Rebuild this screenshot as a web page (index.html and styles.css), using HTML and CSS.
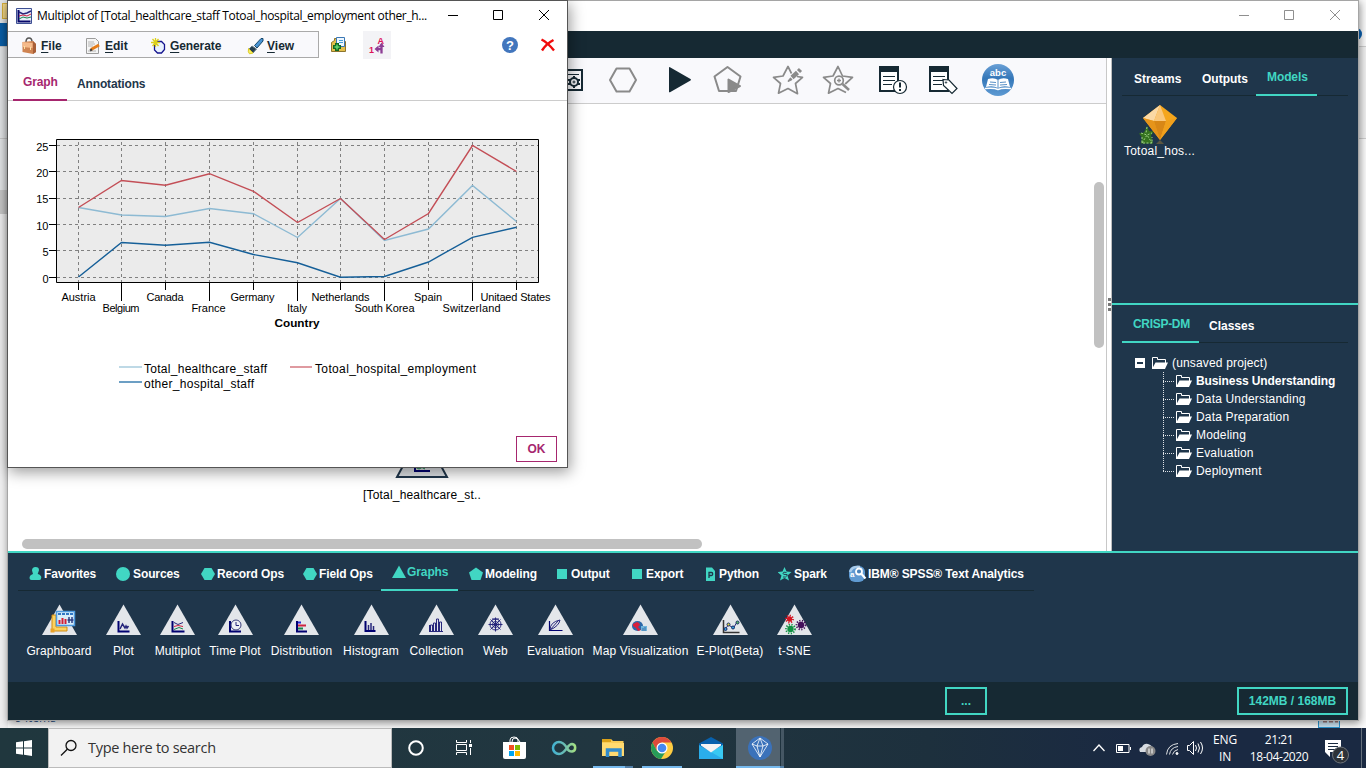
FILE: index.html
```html
<!DOCTYPE html>
<html lang="en">
<head>
<meta charset="utf-8">
<title>Multiplot</title>
<link rel="stylesheet" href="styles.css">
</head>
<body>
<div class="desktop">
  <svg class="backdrop" width="1366" height="728" viewBox="0 0 1366 728">
    <rect width="1366" height="728" fill="#fbfbfb"/>
    <rect width="8" height="728" fill="#f0f0f1"/>
    <rect y="0" width="8" height="190" fill="#e4e6e8"/>
    <rect x="2.500" y="3.500" width="8" height="15" fill="#f8dc8a" stroke="#d9b23f"/>
    <rect y="23" width="8" height="23" fill="#0a5fa8"/>
    <path d="M0 46.500h8M0 138.500h8" stroke="#c8c8c8"/>
    <rect y="190" width="8" height="24" fill="#c9c9c9"/>
    <path d="M1358 46.500h8M1358 138.500h8" stroke="#cfcfcf"/>
    <rect x="1358" y="47" width="8" height="91" fill="#f1f1f1"/>
    <circle cx="1355.500" cy="34" r="6.500" fill="#0a63b5"/>
    <rect x="1318.500" y="710" width="21" height="17.500" fill="#cde6f5" stroke="#2b96d1"/>
    <path d="M1323 721.500h4M1329 721.500h4M1335 721.500h3" stroke="#9b7777" stroke-width="2"/>
    <text x="15" y="721.500" class="items-text">9 items</text>
  </svg>

  <section class="main-window">
    <header class="main-title">
      <svg width="139" height="30" viewBox="1219 1 139 30" fill="none" stroke="#8f8f8f"><path d="M1239 15.500h10M1284.500 10.500h9v9h-9zM1330 10l10 10M1340 10l-10 10"/></svg>
    </header>
    <div class="menu-strip"></div>
    <div class="workspace">
      <div class="stream">
        <div class="toolbar">
          <svg width="36" height="45" viewBox="547 58 36 45" fill="none" stroke="#162933" stroke-width="2"><path d="M555 70h27v20h-27"/><path d="M555 74.500h24" stroke-width="1"/><circle cx="574" cy="82" r="4"/><circle cx="574" cy="82" r="1" stroke-width="1"/><path d="M574 76v2M574 86v2M568 80h2M568 84h2M578 80h2M578 84h2" /></svg>
          <svg class="g22" width="36" height="45" viewBox="605 58 36 45" fill="none" stroke="#8a8a8a" stroke-width="2" stroke-linejoin="round"><path d="M616.500 68.500h13l6.500 11.500-6.500 11.500h-13L610 80z"/></svg>
          <svg class="g21" width="36" height="45" viewBox="662 58 36 45" fill="#162933"><path d="M669 67.500q0-.8 1-.2L690.500 79q1 .8 0 1.500L670 92.200q-1 .3-1-.5z"/></svg>
          <svg class="g12" width="36" height="45" viewBox="710 58 36 45" fill="none" stroke="#8a8a8a" stroke-width="2" stroke-linejoin="round"><path d="M727.500 67l13 9.500L736 91h-17l-4.500-14.500z"/><path d="M728.500 79.500v12.500l11.500-6z" fill="#8a8a8a"/></svg>
          <svg class="g24" width="36" height="45" viewBox="770 58 36 45" fill="none" stroke="#8a8a8a" stroke-width="1.700" stroke-linejoin="round"><path d="M797 76.500l5.500.8-7 6.200 2 10.200-9.500-5.200-9.500 4.700 2-9.700-7-6.200 9.500-1.300 5-9.500 3.500 7"/><path d="M792 77.500l5.500-5" stroke-width="4.500"/><path d="M798.500 71.500l2-2" stroke-width="4.500"/><path d="M788.500 81l2-2.500 1 1z"/></svg>
          <svg class="g14" width="36" height="45" viewBox="820 58 36 45" fill="none" stroke="#8a8a8a" stroke-width="1.700" stroke-linejoin="round"><path d="M846 92.500L838 88.500l-9.500 4.700 2-9.700-7-6.200 9.500-1.300 5-9.500 4.500 9.500 10 1.300-7.300 6.700"/><circle cx="839" cy="80.500" r="4.300"/><path d="M837 80.500h4M839 78.500v4" stroke-width="1.300"/><path d="M842.500 84l6.500 6" stroke-width="2.500"/></svg>
          <svg class="g19" width="36" height="45" viewBox="875 58 36 45" fill="none" stroke="#162933" stroke-width="2"><path d="M880 67h18v24h-18z" fill="#fff"/><path d="M879 69h20" stroke-width="6"/><path d="M883 76.500h12M883 80.500h12M883 84.500h9" stroke-width="1"/><circle cx="900" cy="87" r="6.500" fill="#fff" stroke-width="1.200"/><path d="M900 82.500v5M900 89v2"/></svg>
          <svg class="g14" width="36" height="45" viewBox="925 58 36 45" fill="none" stroke="#162933" stroke-width="2"><path d="M930 67h18v24h-18z" fill="#fff"/><path d="M929 69h20" stroke-width="6"/><path d="M933 76.500h12M933 80.500h12M933 84.500h9" stroke-width="1"/><path d="M943 79.500l6 .5 8 8.500-5 5-8.500-8z" fill="#fff" stroke-width="1.200"/><circle cx="946" cy="82.500" r=".7" stroke-width="1"/></svg>
          <svg class="g19" width="36" height="45" viewBox="980 58 36 45"><defs><linearGradient id="ball" x1="0" y1="0" x2="0" y2="1"><stop offset="0" stop-color="#6aa0d6"/><stop offset=".45" stop-color="#3577b8"/><stop offset="1" stop-color="#5e9ad3"/></linearGradient></defs><circle cx="998" cy="80" r="16" fill="url(#ball)"/><text x="998" y="76" text-anchor="middle" class="abc">abc</text><path d="M988 79q6-2 10 1 4-3 10-1l2 8q-7-2-12 1-5-3-12-1z" fill="#fff"/><path d="M998 80v8M990 82l6 .5M989 84.500l7 .5M1000 82.500l6-.5M1000 85l7-.5" stroke="#4683c0" stroke-width=".9"/><path d="M985 88.500q9-1 13 1 4-2 13-1" stroke="#fff" fill="none" stroke-width="1.500"/></svg>
        </div>
        <div class="canvas">
          <div class="stream-node">
            <svg width="56" height="50" viewBox="394 430 56 50"><path d="M397 477l25-46 25 46z" fill="#dfe2e6" stroke="#20364b" stroke-width="2"/><path d="M415 458v13h15" fill="none" stroke="#000070" stroke-width="2"/><path d="M416 467.500l3 1.500 3-1.500 3 1.500" stroke="#16834c" fill="none"/></svg>
            <span>[Total_healthcare_st..</span>
          </div>
          <div class="vbar"></div>
          <div class="hbar"></div>
        </div>
      </div>
      <div class="splitter"><i></i><i></i><i></i></div>
      <aside class="side">
        <div class="side-top">
          <nav class="tabs"><span class="t-streams">Streams</span><span class="t-outputs">Outputs</span><span class="t-models on">Models</span></nav>
          <div class="model">
            <svg width="42" height="42" viewBox="1139 103 42 42"><path d="M1147 126l2 5 5 .5-3 4 2 8h-12l1-6-3-4 5-1z" fill="#35721f"/><path d="M1147 127l-1 6M1141 133l6 2 5-2M1142 143l5-8 5 8M1142 137v6h10v-6" stroke="#9ccf83" fill="none" stroke-dasharray="2 1.500"/><path d="M1143 118l17-13 17 13-17 22z" fill="#f5a61c"/><path d="M1143 118l17-13-6 16z" fill="#fbd9a5"/><path d="M1160 105l6 16h-12z" fill="#fac77a"/><path d="M1143 118l11 3 6 19z" fill="#e6941a"/><path d="M1154 121h12l-6 19z" fill="#d88716"/><path d="M1166 121l11-3-17 22z" fill="#f0a01c"/><path d="M1160 140l4 4h-8z" fill="#5b5641"/></svg>
            <span>Totoal_hos...</span>
          </div>
        </div>
        <div class="side-bottom">
          <nav class="tabs"><span class="t-crisp on">CRISP-DM</span><span class="t-classes">Classes</span></nav>
          <div class="tree">
            <svg width="62" height="126" viewBox="1134 353 62 126"><defs><g id="folder"><path d="M.5 12V.500h5v2h8V6" fill="none" stroke="#fff"/><path d="M0 12L3.500 5.500h12.500L13 12z" fill="#fff"/></g></defs><rect x="1135" y="357" width="10" height="10" fill="#fff"/><path d="M1137 362h6" stroke="#1f364b" stroke-width="2"/><path d="M1163.500 371v99.500M1163 380.500h12M1163 398.500h12M1163 416.500h12M1163 434.500h12M1163 452.500h12M1163 470.500h12" stroke="#dce1e5" stroke-dasharray="1 1"/><use href="#folder" x="1152" y="356"/><use href="#folder" x="1176" y="374"/><use href="#folder" x="1176" y="392"/><use href="#folder" x="1176" y="410"/><use href="#folder" x="1176" y="428"/><use href="#folder" x="1176" y="446"/><use href="#folder" x="1176" y="464"/></svg>
            <ul><li class="root">(unsaved project)</li><li class="strong">Business Understanding</li><li>Data Understanding</li><li>Data Preparation</li><li>Modeling</li><li>Evaluation</li><li>Deployment</li></ul>
          </div>
        </div>
      </aside>
    </div>
    <section class="palette">
      <nav class="ptabs">
        <span class="p1"><svg width="16" height="16" viewBox="0 0 16 16"><path d="M7.500 1q3.500 0 3.500 3.200L9.700 8q3.600 1 3.600 3.500 0 2.500-2 2.500H3.500Q1.500 14 1.500 12q0-3 3.500-4L4 4.500Q4 1 7.500 1z"/></svg>Favorites</span>
        <span class="p2"><svg width="18" height="16" viewBox="-1 0 18 16"><circle cx="7" cy="8" r="7"/></svg>Sources</span>
        <span class="p3"><svg width="16" height="16" viewBox="1 0 16 16"><path d="M4.500 2h7L15 8l-3.500 6h-7L1 8z"/></svg>Record Ops</span>
        <span class="p4"><svg width="17" height="16" viewBox="0 0 17 16"><path d="M4.500 2h7L15 8l-3.500 6h-7L1 8z"/></svg>Field Ops</span>
        <span class="p5 on"><svg width="16" height="16" viewBox="0 0 16 16"><path d="M8 1.500L15 14H1z"/></svg>Graphs</span>
        <span class="p6"><svg width="17" height="16" viewBox="0 0 17 16"><path d="M8 1.500l7 5L12.500 14h-9L1 6.500z"/></svg>Modeling</span>
        <span class="p7"><svg width="15" height="16" viewBox="0 0 15 16"><path d="M1 3h10v10H1z"/></svg>Output</span>
        <span class="p8"><svg width="17" height="16" viewBox="0 0 17 16"><path d="M3 3h10v10H3z"/></svg>Export</span>
        <span class="p9"><svg width="15" height="16" viewBox="0 0 15 16"><path d="M2 1.500h6L11 5v10H2z"/><path d="M5 12V6.500h2.500q1.200 0 1.200 1.500T7.500 9.500H5" fill="none" stroke="#1f364b" stroke-width="1.300"/></svg>Python</span>
        <span class="p10"><svg width="16" height="16" viewBox="0 0 16 16"><path d="M6.500 1l2 4.500 5 .5-4 3.500 1.500 5-4.500-2.500L2 14.500l1.500-5L-.5 6l5-.5z"/><path d="M8.500 6.500Q5 5.500 5 7.200t3 1.300-.5 2.500H5" fill="none" stroke="#1f364b" stroke-width=".9"/></svg>Spark</span>
        <span class="p11"><svg width="20" height="18" viewBox="0 0 20 18"><rect x="1" y="1" width="16" height="16" rx="6" fill="#5f9ad2"/><path d="M2 7Q4 1 12 2" stroke="#a9cbea" stroke-width="2.500" fill="none"/><text x="2" y="12" class="tiny">a</text><circle cx="11" cy="6.500" r="3" fill="#4a83ba" stroke="#fff" stroke-width="1.800"/><path d="M13.500 9l4 4.500" stroke="#fff" stroke-width="2.200"/></svg>IBM® SPSS® Text Analytics</span>
      </nav>
      <div class="nodes">
        <svg class="defs" width="0" height="0"><defs><path id="tri" d="M17.500 .500L35 31H0z" fill="#e3e6ea"/></defs></svg>
        <div class="n66"><svg width="35" height="31" viewBox="0 0 35 31"><use href="#tri"/><path d="M10 11h4v12h11v4H10z" fill="#fbd25f" stroke="#d18b15"/><path d="M8.500 24.500h4v4h-4z" fill="#e8a128"/><rect x="14.500" y="7.500" width="18" height="14" fill="#d6edfa" stroke="#4d9ade" stroke-width="1.500"/><path d="M16 10h15" stroke="#3077c4" stroke-width="2" stroke-dasharray="3 1"/><path d="M17.500 20v-4M20.500 20v-6M23.500 20v-5" stroke="#d31e35" stroke-width="2"/><path d="M27 19v-6M30 19v-6M25.500 16h6" stroke="#2c3c83" stroke-width="1.500"/></svg>Graphboard</div>
        <div><svg width="35" height="31" viewBox="0 0 35 31"><use href="#tri"/><path d="M12.500 17v10.500h11" class="axis"/><path d="M14 25l2.500-5 2.500 4 1-2 1 2 1.500-2" class="line thick"/></svg>Plot</div>
        <div><svg width="35" height="31" viewBox="0 0 35 31"><use href="#tri"/><path d="M12.500 17v10.500h12" class="axis"/><path d="M14 18.500l4 2 5-2" class="line"/><path d="M14 22.500l4-1 5 1" class="line red"/><path d="M14 25.500l5-2 4 1.500" class="line green"/></svg>Multiplot</div>
        <div class="n52"><svg width="35" height="31" viewBox="0 0 35 31"><use href="#tri"/><path d="M12 17v10.500h11" class="axis"/><circle cx="18" cy="21" r="5" fill="#eef0f4" stroke="#393d7b"/><path d="M18 18v3.500h3" class="line"/></svg>Time Plot</div>
        <div class="n63"><svg width="35" height="31" viewBox="0 0 35 31"><use href="#tri"/><path d="M13 17v10.500h10" class="axis"/><path d="M14 18.500h3" class="axis blue"/><path d="M14 21.500h8" class="axis red"/><path d="M14 24.500h5" class="axis green"/></svg>Distribution</div>
        <div class="n58"><svg width="35" height="31" viewBox="0 0 35 31"><use href="#tri"/><path d="M11.500 17v10h10" class="axis"/><path d="M14.500 26v-5M17 26v-7M19.500 26v-4" class="line thick"/></svg>Histogram</div>
        <div class="n55"><svg width="35" height="31" viewBox="0 0 35 31"><use href="#tri"/><path d="M11.500 27v-6h2v6M14.500 27v-8h2v8M17.500 27v-12h2v12M20.500 27v-9h2v9M10 27.500h14M10.500 21v6" class="line"/></svg>Collection</div>
        <div><svg width="35" height="31" viewBox="0 0 35 31"><use href="#tri"/><circle cx="17.500" cy="20.500" r="5.500" class="line"/><circle cx="17.500" cy="20.500" r="3" class="line"/><path d="M17.500 13.500v14M10.500 20.500h14M12.500 15.500l10 10M22.500 15.500l-10 10M14 15h7" class="line"/></svg>Web</div>
        <div class="n57"><svg width="35" height="31" viewBox="0 0 35 31"><use href="#tri"/><path d="M11.500 17v9.500h13" class="axis thin"/><path d="M12 26q0-8 10-10-1 6-10 10l8-9" class="line"/></svg>Evaluation</div>
        <div class="n95"><svg width="35" height="31" viewBox="0 0 35 31"><use href="#tri"/><ellipse cx="14.500" cy="22" rx="5.500" ry="5" fill="#2c68a8"/><path d="M10 20l4-2 2 1 1 2-2 2 3 3-3 1-2-3-3-2z" fill="#d9203c"/><path d="M18 22h6v5h-6z" fill="#71b5dd"/><path d="M20 27v-3M22 27v-4" stroke="#3971a7"/></svg>Map Visualization</div>
        <div class="n66"><svg width="35" height="31" viewBox="0 0 35 31"><use href="#tri"/><path d="M10.500 16v12.500h16" stroke="#333" fill="none" stroke-width="1.500"/><path d="M12 25l3.500-4 5 3 3.500-6" class="line"/><g fill="#329bd9" stroke="#172c65"><circle cx="12.500" cy="25" r="1.500"/><circle cx="15.500" cy="20.500" r="1.500" fill="#e5d83d"/><circle cx="20" cy="23.500" r="1.500"/><circle cx="24.500" cy="18.500" r="1.500" fill="#55b663"/></g></svg>E-Plot(Beta)</div>
        <div><svg width="35" height="31" viewBox="0 0 35 31"><use href="#tri"/><g fill="none" stroke-width="1.800" stroke-dasharray="1.200 1.500"><circle cx="12.500" cy="15" r="3.500" stroke="#cf1320"/><circle cx="13.500" cy="25" r="4.500" stroke="#119143"/><circle cx="24" cy="21" r="4.500" stroke="#44105b"/></g><circle cx="12.500" cy="15" r="2.700" fill="#d51421"/><circle cx="13.500" cy="25" r="3.200" fill="#119143"/><circle cx="24" cy="21" r="3.200" fill="#44105b"/></svg>t-SNE</div>
      </div>
    </section>
    <footer class="status"><button class="dots">...</button><button class="memory">142MB / 168MB</button></footer>
  </section>

  <section class="dialog">
    <header class="dialog-title">
      <svg width="16" height="16" viewBox="0 0 16 16"><path d="M.5 .500h15v15H.5z" fill="#e9eefa" stroke="#3d4f93"/><path d="M2.500 2v11.500h12" stroke="#08086b" stroke-width="2" fill="none"/><path d="M3 4l4 2 4-1 4-2" class="line thick"/><path d="M3 8l4-1 4 1 4-2" class="line red"/><path d="M3 11l4-2 4 1 4-1" class="line green"/></svg>
      <span>Multiplot of [Total_healthcare_staff Totoal_hospital_employment other_h...</span>
      <svg class="controls" width="120" height="30" viewBox="439 1 120 30" fill="none" stroke="#000"><path d="M448 15.500h10M493.500 10.500h9v9h-9zM539 10l10 10M549 10l-10 10"/></svg>
    </header>
    <div class="dialog-bar">
      <div class="menus">
        <span class="m1"><svg width="16" height="18" viewBox="0 0 16 18"><path d="M5 5q0-4 3-4t3 4" fill="none" stroke="#555" stroke-width="1.500"/><path d="M1.500 5l10.500-1 3 3v8l-3 2-10.500-2z" fill="#cf8452"/><path d="M1.500 5l10 1v5l-10-1z" fill="#f5ba8b"/><path d="M12 4l3 3v8l-3 2V6z" fill="#a85f38"/><path d="M3.500 9v3M9.500 10v3" stroke="#fce1a5"/></svg><b><u>F</u>ile</b></span>
        <span class="m2"><svg width="16" height="18" viewBox="0 0 16 18"><path d="M1.500 1.500h9l3 3v12h-12z" fill="#f5f5f5" stroke="#9c9c9c"/><path d="M3 5h6M3 7h7M3 9h5M3 14h8" stroke="#b5b5b5"/><path d="M6 12.500l8-4.500" stroke="#e57c19" stroke-width="3"/><path d="M5 13.500l2-1" stroke="#444" stroke-width="2"/></svg><b><u>E</u>dit</b></span>
        <span class="m3"><svg width="16" height="18" viewBox="0 0 16 18"><path d="M5.500 4.500h5l3 3v5l-3 3.500h-4L3.500 13V7z" fill="#e9f2ff" stroke="#14148f" stroke-width="1.300"/><path d="M4.500 1v9M0 5.500h9M1.500 2l6 7M7.500 2l-6 7" stroke="#ddd01a" stroke-width="1.300"/></svg><b><u>G</u>enerate</b></span>
        <span class="m4"><svg width="18" height="18" viewBox="0 0 18 18"><path d="M7.500 8.500l6.500-7h2V4l-6 7z" fill="#4994d4" stroke="#17476b"/><path d="M5 9l4.500 3-3.500 4-4-4z" fill="#253e4f" stroke="#6b7e88"/><path d="M1.500 11.500l4.500 4.500-3.500.8q-1.800-1.500-1-5.300z" fill="#f5ed67" stroke="#dccb24"/></svg><b><u>V</u>iew</b></span>
      </div>
      <svg class="tools" width="239" height="28" viewBox="319 31 239 28"><rect x="363" y="31" width="28" height="28" fill="#f3f3f6"/><path d="M331.500 51.500v-9l3-2v-2h8v3h3v10z" fill="#e5bf4a" stroke="#8c752f"/><path d="M336.500 37.500h8v9h-8z" fill="#eef7ff" stroke="#3b78b5"/><path d="M339 40.500h4M339 42.500h4" stroke="#48a0d8"/><path d="M337 43v8M333 47h8" stroke="#126922" stroke-width="4"/><path d="M337 44.500v5M334.500 47h5" stroke="#64d76e" stroke-width="1.500"/><text x="369" y="53" class="swap">1</text><text x="377.500" y="43.500" class="swap">A</text><path d="M381.500 44.500v9M376 49h6" fill="none" stroke="#8d3e95" stroke-width="2.300"/><path d="M378.500 45.500l-4 3.500 4 3.500zM378.500 47l3-4.500 3 4.500z" fill="#8d3e95"/><circle cx="510" cy="45" r="8" fill="#4276bd"/><text x="510" y="49.500" text-anchor="middle" class="help">?</text><path d="M541.500 39.500q6 3 12.500 11M542 50.500q4.500-7 11.500-10.500" stroke="#f00b0b" stroke-width="2.400" fill="none"/></svg>
    </div>
    <nav class="dialog-tabs"><span class="on">Graph</span><span>Annotations</span></nav>
    <div class="chart">
      <svg width="559" height="335" viewBox="8 101 559 335">
        <path d="M56.500 139.500h482v143h-482z" fill="#ebebeb" stroke="#000"/>
        <path d="M57 145.500h481M57 171.500h481M57 198.500h481M57 224.500h481M57 250.500h481M57 277.500h481M78.500 142v140M121.500 142v140M165.500 142v140M209.500 142v140M253.500 142v140M297.500 142v140M340.500 142v140M384.500 142v140M428.500 142v140M472.500 142v140M516.500 142v140" stroke="#808080" stroke-dasharray="3 3"/>
        <path d="M49 145.500h7M49 171.500h7M49 198.500h7M49 224.500h7M49 250.500h7M49 277.500h7M78.500 283v7M121.500 283v18M165.500 283v7M209.500 283v18M253.500 283v7M297.500 283v18M340.500 283v7M384.500 283v18M428.500 283v7M472.500 283v18M516.500 283v7" stroke="#000"/>
        <g fill="none" stroke-width="1.400">
          <path d="M78.500 207.500L121.500 215l44 1.500 44-8 44 5.200 44 23.800 43-39 44 42 44-11.500 44-43.500 44 36" stroke="#8dbad3"/>
          <path d="M78.500 277l43-34.500 44 2.800 44-3 44 12.200 44 8.300 43 14.400 44-.7 44-14.500 44-24.700 44-10" stroke="#155f98"/>
          <path d="M78.500 207.500l43-27 44 4.800 44-11.600 44 17.600 44 31.200 43-24 44 41 44-26 44-68 44 26" stroke="#c34e56"/>
        </g>
        <g class="ylab"><text x="48.500" y="151">25</text><text x="48.500" y="177">20</text><text x="48.500" y="203">15</text><text x="48.500" y="230">10</text><text x="48.500" y="256">5</text><text x="48.500" y="283">0</text></g>
        <g class="xlab"><text x="78.500" y="301">Austria</text><text x="121" y="312" textLength="37">Belgium</text><text x="165" y="301" textLength="37">Canada</text><text x="208.500" y="312">France</text><text x="252.500" y="301" textLength="44">Germany</text><text x="297" y="312">Italy</text><text x="340.500" y="301" textLength="58">Netherlands</text><text x="384.500" y="312" textLength="60">South Korea</text><text x="428" y="301">Spain</text><text x="471.500" y="312" textLength="58">Switzerland</text><text x="515.500" y="301" textLength="70">Unitaed States</text><text x="297" y="327" class="axis-title" textLength="45" lengthAdjust="spacingAndGlyphs">Country</text></g>
        <path d="M119 367h23" stroke="#bed9e6" stroke-width="2"/><path d="M290 367h22" stroke="#df9aa0" stroke-width="2"/><path d="M119 382h23" stroke="#6c9fc4" stroke-width="2"/>
        <g class="legend"><text x="144" y="373" textLength="123">Total_healthcare_staff</text><text x="315" y="373" textLength="161">Totoal_hospital_employment</text><text x="144" y="388" textLength="110">other_hospital_staff</text></g>
      </svg>
    </div>
    <div class="dialog-foot"><button class="ok">OK</button></div>
  </section>

  <footer class="taskbar">
    <svg width="48" height="40" viewBox="0 728 48 40"><path d="M16 742.300l7-1v6.200h-7zM24 741.200l8-1.200v7.500h-8zM16 748.500h7v6.200l-7-1zM24 748.500h8v7.500l-8-1.200z" fill="#fff"/></svg>
    <div class="search"><svg width="18" height="18" viewBox="0 0 18 18" fill="none" stroke="#111" stroke-width="1.300"><circle cx="11" cy="6.500" r="5"/><path d="M7.300 10.200L1 16.500"/></svg><span>Type here to search</span></div>
    <svg width="392" height="40" viewBox="392 728 392 40">
      <rect x="736" y="728" width="44" height="40" fill="#526370"/><rect x="781" y="728" width="3" height="40" fill="#455764"/>
      <path d="M593 767h32M642 767h40M736 767h44" stroke="#76b9ed" stroke-width="2"/><path d="M625 767h8M780 767h4" stroke="#527fa7" stroke-width="2"/>
      <circle cx="416" cy="748" r="6.800" fill="none" stroke="#fff" stroke-width="2"/>
      <path d="M456.500 740v2.500h10V740M456.500 755v-2.500h10v2.500M456.500 744.500h10v6h-10zM470.500 740v3M470.500 748v7" stroke="#fff" fill="none"/><path d="M469 744h3v3h-3z" fill="#fff"/>
      <path d="M510 742v-2q0-3 4-3t4 3v2M512 742q0-4 3-4t5 4" stroke="#fff" fill="none"/><path d="M503 742h23v15q0 2-2 2h-19q-2 0-2-2z" fill="#fff"/><path d="M509 745h5v5h-5z" fill="#f25022"/><path d="M515 745h5v5h-5z" fill="#7fba00"/><path d="M509 751h5v5h-5z" fill="#00a4ef"/><path d="M515 751h5v5h-5z" fill="#ffb900"/>
      <defs><linearGradient id="inf"><stop offset="0" stop-color="#43b2d1"/><stop offset=".5" stop-color="#69bbb4"/><stop offset="1" stop-color="#a4df82"/></linearGradient></defs><path d="M567 748c-3-5-6-6-8-6a5.800 5.800 0 000 12c3 0 5-2 8-6 2-3 3.500-4 5-4a3.800 3.800 0 010 7.500c-2 0-4-1-5-3.500z" fill="none" stroke="url(#inf)" stroke-width="2.500"/>
      <path d="M602 739h9l2 2h10.500v15H602z" fill="#f8cc57"/><path d="M602 739h9v3h-9z" fill="#dca219"/><path d="M602 743h22v13h-22z" fill="#ffda70"/><path d="M607.500 757v-7h12.500v7" fill="none" stroke="#318bcc" stroke-width="3.500"/>
      <circle cx="662" cy="748" r="11" fill="#ffcd42"/><path d="M652.500 742.500A11 11 0 01671.500 742.500H662L657 751z" fill="#de4b3c"/><path d="M652.500 742.500A11 11 0 00661 759l5-8-9 0z" fill="#279c59"/><circle cx="662" cy="748" r="5.500" fill="#fff"/><circle cx="662" cy="748" r="4.300" fill="#4688f1"/>
      <path d="M699 743.500l12-6.500 12 6.500v15.500h-24z" fill="#0861ad"/><path d="M699 745l12 7 12-7v14h-24z" fill="#2aadeb"/><path d="M723 745v14l-12-7z" fill="#39c9f3"/><path d="M701 744h20v1.500l-10 7-10-7z" fill="#f4f4f4"/>
      <circle cx="760" cy="748" r="12" fill="#3b72ba"/><path d="M752 744l8-6 8 6-8 13zM752 744l5 2h6l5-2M760 738l-3 8 3 11 3-11z" fill="none" stroke="#fff" stroke-width=".8"/>
    </svg>
    <svg class="tray" width="126" height="40" viewBox="1083 728 126 40" fill="none" stroke="#fff">
      <path d="M1093.500 751l5.500-6 5.500 6" stroke-width="1.300"/><path d="M1116.500 744.500h12.500v8h-12.500zM1130.500 747v3"/><path d="M1118 746h5v5h-5z" fill="#fff" stroke="none"/>
      <path d="M1140 752q-2-4 2-5 2-4 6-3 4 1 5 5v3z" fill="#d7dce2" stroke="none"/><circle cx="1150.500" cy="751" r="5" fill="#888" stroke="none"/><path d="M1149 748.500v5M1152 748.500v5"/>
      <path d="M1166.500 754.500q1-10 11.500-11M1169.500 754.500q1-7 8.500-8M1172.500 754.500q1-4 5.500-5" stroke="#dfe2e5"/><circle cx="1177" cy="753.500" r="1" fill="#fff"/>
      <path d="M1187.500 745.500h2l4-4v13l-4-4h-2zM1195.500 745q2 3 0 6M1198 743.500q3 4.500 0 9M1200.500 742q4 6 0 12"/>
    </svg>
    <div class="lang">ENG<br>IN</div>
    <div class="clock">21:21<br>18-04-2020</div>
    <svg class="notice" width="46" height="40" viewBox="1320 728 46 40"><path d="M1325 740h16v12h-11v5l-5-5z" fill="#fff"/><path d="M1328 743.500h10M1328 746.500h10M1328 749.500h8" stroke="#1b2a40"/><circle cx="1340.500" cy="755" r="8" fill="#2d3238" stroke="#6d737a"/><text x="1340.500" y="759.500" text-anchor="middle" class="count">4</text><path d="M1361.500 728v40" stroke="#65707c"/></svg>
  </footer>
</div>
</body>
</html>
```
FILE: styles.css
```css
*{box-sizing:border-box}
body{margin:0;font:12px/14px "Liberation Sans",Arial,sans-serif}
svg{display:block;flex:none}
button{font:bold 12px/14px "Liberation Sans",Arial,sans-serif;padding:0;background:none;border-radius:0}
.desktop{position:relative;width:1366px;height:768px;overflow:hidden}
.backdrop{position:absolute;left:0;top:0}
.items-text{font:12px "Open Sans",sans-serif;fill:#30568a}

.main-window{position:absolute;left:7px;top:0;width:1352px;height:721px;border:1px solid #a5a5a5;box-shadow:1px 2px 8px rgba(0,0,0,.45);display:flex;flex-direction:column;background:#fff}
.main-title{height:30px;display:flex;justify-content:flex-end}
.menu-strip{height:27px;background:#162933}
.workspace{height:493px;display:flex}
.stream{width:1099px;border-right:1px solid #c8c8c8;display:flex;flex-direction:column}
.toolbar{height:46px;background:#f9f9fc;border-bottom:1px solid #ccc;display:flex;padding-left:539px}
.g12{margin-left:12px}
.g14{margin-left:14px}
.g19{margin-left:19px}
.g21{margin-left:21px}
.g22{margin-left:22px}
.g24{margin-left:24px}
.abc{font:bold 9.500px "Liberation Sans",sans-serif;fill:#fff}
.canvas{position:relative;flex:1}
.stream-node{position:absolute;left:354px;top:326px;width:120px;display:flex;flex-direction:column;align-items:center;gap:8px;letter-spacing:.17px}
.vbar{position:absolute;right:2px;top:78px;width:10px;height:166px;border-radius:5px;background:#c1c1c1}
.hbar{position:absolute;left:14px;bottom:2px;width:680px;height:10px;border-radius:5px;background:#c1c1c1}
.splitter{width:5px;border-right:1px solid #bdbdbd;display:flex;flex-direction:column;align-items:center;gap:2px;padding-top:240px}
.splitter i{width:3px;height:3px;background:#777}
.side{width:246px;background:#1f364b;color:#fff}
.side-top{height:245px;padding-left:10px}
.side-bottom{height:248px;padding-left:10px;border-top:2px solid #41d6c3}
.tabs{display:flex;width:226px;height:38px;font-weight:bold;box-shadow:inset 0 -1px #162933}
.tabs span{padding-top:14px;flex:none;height:38px}
.tabs .on{color:#41d6c3;padding-top:12px;border-bottom:2px solid #41d6c3;height:38px}
.t-streams{width:69px;padding-left:12px}
.t-outputs{width:65px;padding-left:11px}
.t-models{width:61px;padding-left:11px;letter-spacing:-.1px}
.t-crisp{width:77px;padding-left:11px;letter-spacing:-.3px}
.t-classes{padding-left:10px}
.model{width:75px;display:flex;flex-direction:column;align-items:center;margin-top:7px;letter-spacing:.23px}
.model svg{margin-bottom:-1px}
.tree{display:flex;padding:11px 0 0 12px}
.tree ul{list-style:none;margin:0;padding:0;line-height:18px}
.tree li{white-space:nowrap;letter-spacing:.16px}
.tree .root{margin-left:-24px}
.tree .strong{font-weight:bold;letter-spacing:-.1px}

.palette{height:131px;background:#1f364b;border-top:2px solid #41d6c3;color:#fff}
.ptabs{display:flex;width:1016px;height:38px;margin-left:10px;font-weight:bold;letter-spacing:-.1px;box-shadow:inset 0 -1px #162933}
.ptabs span{display:flex;align-items:center;padding:3px 0 0 10px;white-space:nowrap}
.ptabs svg{fill:#41d6c3}
.ptabs .on{color:#41d6c3;border-bottom:2px solid #41d6c3;padding-top:2px}
.p1{width:87px;letter-spacing:-.15px}
.p2{width:86px}
.p3{width:101px}
.p4{width:89px}
.p5{width:77px}
.p6{width:88px}
.p7{width:73px}
.p8{width:75px}
.p9{width:74px}
.p10{width:70px}
.p11{width:196px}
.tiny{font:bold 8px "Liberation Sans",sans-serif;fill:#fff}
.nodes{display:flex;gap:9px;padding:13px 0 0 18px}
.nodes .defs{position:absolute}
.nodes div{width:45px;display:flex;flex-direction:column;align-items:center;gap:9px;white-space:nowrap;letter-spacing:.12px}
.nodes .n66{width:66px}
.nodes .n52{width:52px}
.nodes .n63{width:63px}
.nodes .n58{width:58px}
.nodes .n55{width:55px}
.nodes .n57{width:57px}
.nodes .n95{width:95px}
.axis{fill:none;stroke:#000070;stroke-width:2}
.line{fill:none;stroke:#27277c}
.red{stroke:#ce2340}
.green{stroke:#16834c}
.blue{stroke:#2525d5}
.thick{stroke-width:1.500}
.thin{stroke-width:1.200}
.status{height:38px;background:#162933;display:flex;padding:5px 10px 0 937px;justify-content:space-between}
.status button{height:28px;border:2px solid #41d6c3;color:#41d6c3}
.dots{width:42px}
.memory{width:111px}

.dialog{position:absolute;left:7px;top:0;width:561px;height:468px;border:1px solid #555;background:#fff;box-shadow:2px 4px 14px rgba(0,0,0,.4);display:flex;flex-direction:column}
.dialog-title{height:30px;display:flex;align-items:center;padding-left:8px;font:12px/16px "Open Sans",sans-serif}
.dialog-title span{margin-left:5px;width:402px;white-space:nowrap;letter-spacing:-.33px}
.dialog-bar{height:28px;display:flex}
.menus{width:311px;height:27px;border:1px solid #aaa;border-left:0;background:#f9f9fc;display:flex;color:#162933}
.menus span{display:flex;align-items:center;height:27px}
.menus u{text-decoration-thickness:1px;text-underline-offset:2px}
.menus b{margin-left:4px}
.m1{width:63px;padding-left:13px}
.m2{width:67px;padding-left:14px}
.m3{width:96px;margin-left:13px}
.menus .m3 b{margin-left:3px;letter-spacing:-.1px}
.menus .m4 b{margin-left:2px}
.swap{font:bold 9px "Liberation Sans",sans-serif;fill:#dd155a}
.help{font:bold 13px "Liberation Sans",sans-serif;fill:#fff}
.dialog-tabs{height:42px;display:flex;font-weight:bold;color:#1f364b;padding-left:5px;box-shadow:inset 0 -1px #ccc;letter-spacing:-.15px}
.dialog-tabs span{padding:18px 0 0 10px}
.dialog-tabs .on{width:54px;padding-top:16px;color:#a6266e;border-bottom:2px solid #a6266e}
.chart{height:335px}
.ylab{font:11px "Liberation Sans",sans-serif;text-anchor:end}
.xlab{font:11px "Liberation Sans",sans-serif;text-anchor:middle}
.axis-title{font-weight:bold}
.legend{font:12px "Liberation Sans",sans-serif}
.dialog-foot{display:flex;justify-content:flex-end;padding-right:10px}
.ok{width:41px;height:26px;border:1px solid #a6266e;color:#a6266e;background:#fff}

.taskbar{position:absolute;left:0;top:728px;width:1366px;height:40px;background:linear-gradient(90deg,#20373e 0,#213640 45%,#1d303d 68%,#1a2942 83%,#1a2942 100%);display:flex;color:#fff}
.search{width:344px;height:40px;background:#f2f2f2;border:1px solid #bbb;display:flex;align-items:center;padding-left:11px;color:#333;font:14.500px/20px "Open Sans",sans-serif}
.search span{margin-left:10px;letter-spacing:-.3px}
.tray{margin-left:299px}
.lang,.clock{font:12px/17px "Open Sans",sans-serif;text-align:center;padding-top:3px}
.lang{width:32px;letter-spacing:-.2px}
.clock{width:76px;letter-spacing:-.43px}
.notice{margin-left:3px}
.count{font:13px "Open Sans",sans-serif;fill:#fff}
```
